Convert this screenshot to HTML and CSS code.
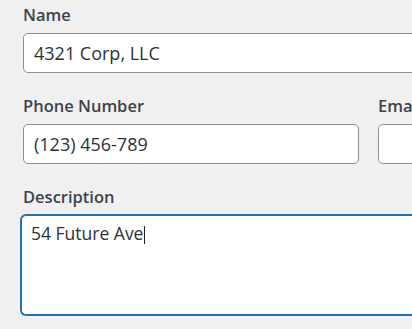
FILE: index.html
```html
<!DOCTYPE html>
<html lang="en">
<head>
<meta charset="utf-8">
<title>Contact form</title>
<link rel="stylesheet" href="styles.css">
</head>
<body>
<form class="form">
  <div class="field">
    <label class="label" for="name">Name</label>
    <input class="input" id="name" type="text" value="4321 Corp, LLC">
  </div>
  <div class="row">
    <div class="field">
      <label class="label" for="phone">Phone Number</label>
      <input class="input" id="phone" type="text" value="(123) 456-789">
    </div>
    <div class="field">
      <label class="label" for="email">Email</label>
      <input class="input" id="email" type="text" value="">
    </div>
  </div>
  <div class="field">
    <label class="label" id="desc-label">Description</label>
    <div class="textarea is-focused" role="textbox" aria-multiline="true" aria-labelledby="desc-label">54 Future Ave<span class="caret"></span></div>
  </div>
</form>
</body>
</html>
```

FILE: styles.css
```css
html, body {
  margin: 0;
  padding: 0;
  background: #f0f0f1;
  overflow: hidden;
}

body {
  font-family: "Open Sans", "Noto Sans", sans-serif;
  color: #2c3338;
}

.form {
  width: 692px;
  padding: 5px 0 0 23px;
}

.field {
  margin-bottom: 23px;
}

.row {
  display: grid;
  grid-template-columns: 336px 336px;
  column-gap: 19px;
}

.label {
  display: block;
  font-size: 16.5px;
  line-height: 20px;
  font-weight: 600;
  color: #3c434a;
  margin-bottom: 8px;
  white-space: nowrap;
}

.input {
  display: block;
  box-sizing: border-box;
  width: 100%;
  height: 40px;
  margin: 0;
  padding: 0 10px;
  border: 1px solid #8c8f94;
  border-radius: 5px;
  background: #fff;
  font-family: inherit;
  font-size: 18px;
  color: #2c3338;
  outline: none;
}

.textarea {
  box-sizing: border-box;
  width: 100%;
  height: 100px;
  margin-left: -2px;
  padding: 5px 9px;
  border: 1px solid #2271b1;
  border-radius: 5px;
  background: #fff;
  font-size: 17.5px;
  line-height: 24px;
  color: #2c3338;
}

.textarea.is-focused {
  box-shadow: 0 0 0 1px #2271b1;
}

.caret {
  display: inline-block;
  width: 1px;
  height: 18px;
  margin-left: 1px;
  background: #1d2327;
  vertical-align: -4px;
}
```
